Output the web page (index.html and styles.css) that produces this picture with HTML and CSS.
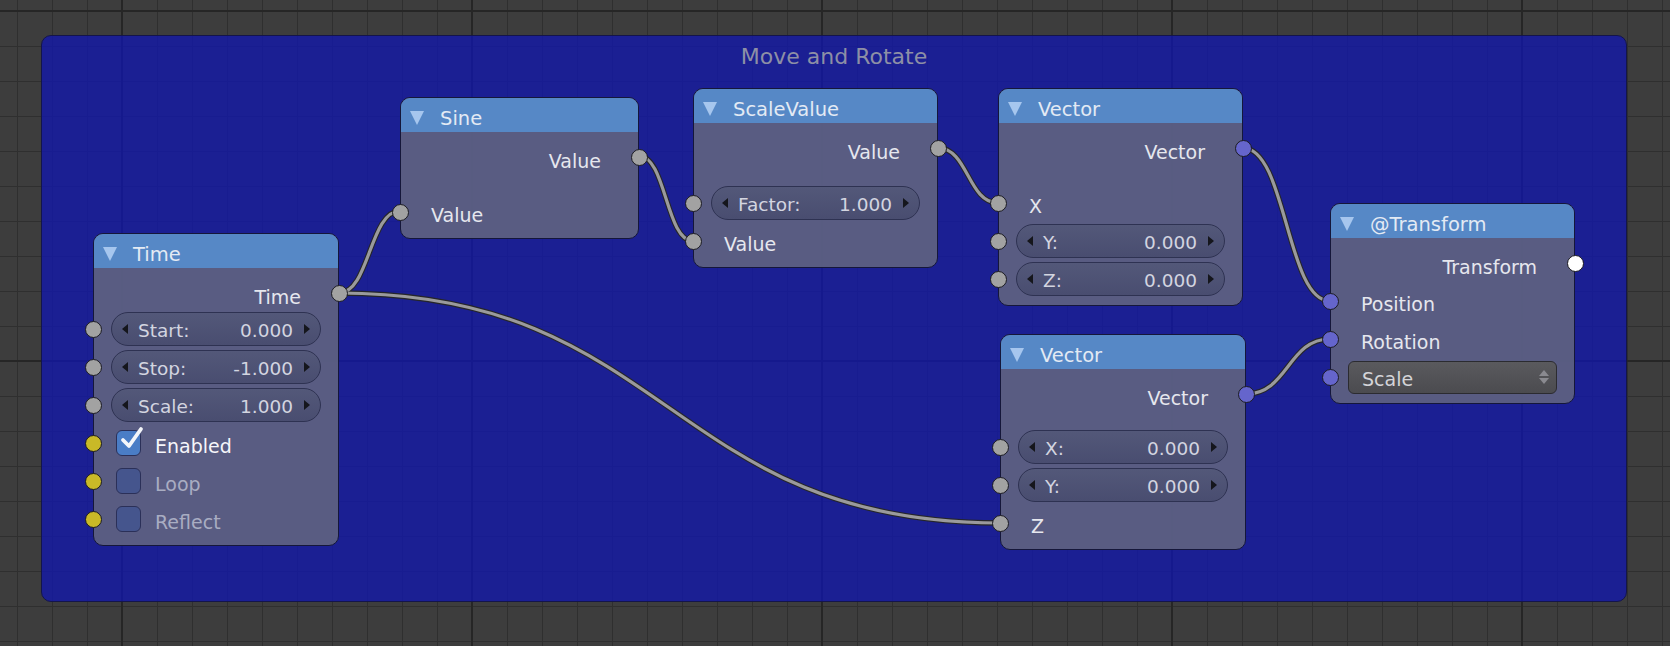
FILE: index.html
```html
<!DOCTYPE html>
<html>
<head>
<meta charset="utf-8">
<link rel="stylesheet" href="styles.css">
</head>
<body>
<div class="canvas">
  <div class="frame">
    <div class="frame-title">Move and Rotate</div>
  </div>

  <svg class="wires" width="1670" height="646" viewBox="0 0 1670 646">
    <g class="wire-outer">
      <path d="M339 293 C369.5 293 369.5 211 400 211"/>
      <path d="M339 293 C669.5 293 669.5 523 1000 523"/>
      <path d="M639 156 C666 156 666 241 693 241"/>
      <path d="M938 148 C968 148 968 203 998 203"/>
      <path d="M1243 148 C1286.5 148 1286.5 301 1330 301"/>
      <path d="M1246 394 C1288 394 1288 339 1330 339"/>
    </g>
    <g class="wire-inner">
      <path d="M339 293 C369.5 293 369.5 211 400 211"/>
      <path d="M339 293 C669.5 293 669.5 523 1000 523"/>
      <path d="M639 156 C666 156 666 241 693 241"/>
      <path d="M938 148 C968 148 968 203 998 203"/>
      <path d="M1243 148 C1286.5 148 1286.5 301 1330 301"/>
      <path d="M1246 394 C1288 394 1288 339 1330 339"/>
    </g>
  </svg>

  <!-- Time -->
  <div class="node n-time">
    <div class="node-head"><span class="tri"></span><span class="title">Time</span></div>
    <div class="node-body">
      <div class="row out"><span class="label">Time</span><span class="sock gray"></span></div>
      <div class="row in fld"><span class="sock gray"></span>
        <div class="field"><span class="arr l"></span><span class="fl">Start:</span><span class="fv">0.000</span><span class="arr r"></span></div>
      </div>
      <div class="row in fld"><span class="sock gray"></span>
        <div class="field"><span class="arr l"></span><span class="fl">Stop:</span><span class="fv">-1.000</span><span class="arr r"></span></div>
      </div>
      <div class="row in fld"><span class="sock gray"></span>
        <div class="field"><span class="arr l"></span><span class="fl">Scale:</span><span class="fv">1.000</span><span class="arr r"></span></div>
      </div>
      <div class="row in chk"><span class="sock yellow"></span>
        <span class="cb on"><svg class="check" width="25" height="25" viewBox="0 0 25 25"><polyline points="5,12 11,18 23,1"/></svg></span><span class="cl bright">Enabled</span>
      </div>
      <div class="row in chk"><span class="sock yellow"></span>
        <span class="cb"></span><span class="cl dim">Loop</span>
      </div>
      <div class="row in chk"><span class="sock yellow"></span>
        <span class="cb"></span><span class="cl dim">Reflect</span>
      </div>
    </div>
  </div>

  <!-- Sine -->
  <div class="node n-sine">
    <div class="node-head"><span class="tri"></span><span class="title">Sine</span></div>
    <div class="node-body">
      <div class="row out"><span class="label">Value</span><span class="sock gray"></span></div>
      <div class="spacer tall"></div>
      <div class="row in"><span class="sock gray"></span><span class="label">Value</span></div>
    </div>
  </div>

  <!-- ScaleValue -->
  <div class="node n-scale">
    <div class="node-head"><span class="tri"></span><span class="title">ScaleValue</span></div>
    <div class="node-body">
      <div class="row out"><span class="label">Value</span><span class="sock gray"></span></div>
      <div class="spacer tall"></div>
      <div class="row in fld"><span class="sock gray"></span>
        <div class="field"><span class="arr l"></span><span class="fl">Factor:</span><span class="fv">1.000</span><span class="arr r"></span></div>
      </div>
      <div class="row in"><span class="sock gray"></span><span class="label">Value</span></div>
    </div>
  </div>

  <!-- Vector 1 -->
  <div class="node n-vec1">
    <div class="node-head"><span class="tri"></span><span class="title">Vector</span></div>
    <div class="node-body">
      <div class="row out"><span class="label">Vector</span><span class="sock violet"></span></div>
      <div class="spacer tall"></div>
      <div class="row in"><span class="sock gray"></span><span class="label">X</span></div>
      <div class="row in fld"><span class="sock gray"></span>
        <div class="field"><span class="arr l"></span><span class="fl">Y:</span><span class="fv">0.000</span><span class="arr r"></span></div>
      </div>
      <div class="row in fld"><span class="sock gray"></span>
        <div class="field"><span class="arr l"></span><span class="fl">Z:</span><span class="fv">0.000</span><span class="arr r"></span></div>
      </div>
    </div>
  </div>

  <!-- Vector 2 -->
  <div class="node n-vec2">
    <div class="node-head"><span class="tri"></span><span class="title">Vector</span></div>
    <div class="node-body">
      <div class="row out"><span class="label">Vector</span><span class="sock violet"></span></div>
      <div class="spacer"></div>
      <div class="row in fld"><span class="sock gray"></span>
        <div class="field"><span class="arr l"></span><span class="fl">X:</span><span class="fv">0.000</span><span class="arr r"></span></div>
      </div>
      <div class="row in fld"><span class="sock gray"></span>
        <div class="field"><span class="arr l"></span><span class="fl">Y:</span><span class="fv">0.000</span><span class="arr r"></span></div>
      </div>
      <div class="row in"><span class="sock gray"></span><span class="label">Z</span></div>
    </div>
  </div>

  <!-- @Transform -->
  <div class="node n-trans">
    <div class="node-head"><span class="tri"></span><span class="title">@Transform</span></div>
    <div class="node-body">
      <div class="row out"><span class="label">Transform</span><span class="sock white"></span></div>
      <div class="spacer thin"></div>
      <div class="row in"><span class="sock violet"></span><span class="label">Position</span></div>
      <div class="row in"><span class="sock violet"></span><span class="label">Rotation</span></div>
      <div class="row in fld"><span class="sock violet"></span>
        <div class="dropdown"><span class="dl">Scale</span><span class="updown"><span class="up"></span><span class="dn"></span></span></div>
      </div>
    </div>
  </div>
</div>
</body>
</html>
```

FILE: styles.css
```css
html, body {
  margin: 0;
  padding: 0;
  background: #3d3d3d;
}

.canvas {
  position: relative;
  width: 1670px;
  height: 646px;
  overflow: hidden;
  font-family: "DejaVu Sans", "Noto Sans", sans-serif;
  background-color: #3d3d3d;
  background-image:
    linear-gradient(to right, #262626 2px, transparent 2px),
    linear-gradient(to bottom, #262626 2px, transparent 2px),
    linear-gradient(to right, #2f2f2f 1px, transparent 1px),
    linear-gradient(to bottom, #2f2f2f 1px, transparent 1px);
  background-size: 350px 350px, 350px 350px, 35px 35px, 35px 35px;
  background-position: 121px 0, 0 10px, 17px 0, 0 11px;
}

.frame {
  position: absolute;
  left: 41px;
  top: 35px;
  width: 1586px;
  height: 567px;
  box-sizing: border-box;
  border: 1px solid #14154a;
  border-radius: 10px;
  background: rgba(16, 21, 178, 0.74);
}

.frame-title {
  margin-top: 7px;
  text-align: center;
  font-size: 22px;
  line-height: 28px;
  color: #8d8fa6;
}

.wires {
  position: absolute;
  left: 0;
  top: 0;
  pointer-events: none;
}

.wire-outer path {
  fill: none;
  stroke: #26262a;
  stroke-width: 5.4;
}

.wire-inner path {
  fill: none;
  stroke: #9a9a9c;
  stroke-width: 3.2;
}

/* ---------- nodes ---------- */
.node {
  position: absolute;
  box-sizing: border-box;
  border: 1px solid #15173a;
  border-radius: 10px;
  background: rgba(98, 101, 128, 0.88);
  color: #e6e7ee;
  font-size: 19px;
}

.n-time  { left: 93px;   top: 233px; width: 246px; }
.n-sine  { left: 400px;  top: 97px;  width: 239px; }
.n-scale { left: 693px;  top: 88px;  width: 245px; }
.n-vec1  { left: 998px;  top: 88px;  width: 245px; }
.n-vec2  { left: 1000px; top: 334px; width: 246px; }
.n-trans { left: 1330px; top: 203px; width: 245px; }

.node-head {
  height: 34px;
  box-sizing: border-box;
  padding: 5px 0 0 9px;
  display: flex;
  align-items: center;
  background: #5688c6;
  border-radius: 9px 9px 0 0;
  color: #e3eaf4;
  font-size: 19.5px;
}

.title {
  line-height: 1;
  padding-top: 2px;
}

.tri {
  width: 0;
  height: 0;
  border-left: 7.5px solid transparent;
  border-right: 7.5px solid transparent;
  border-top: 14px solid #a6c6ee;
  margin-right: 16px;
}

.node-body {
  padding: 8px 0 7px;
}

.row {
  position: relative;
  height: 38px;
  display: flex;
  align-items: center;
}

.row.out {
  height: 34px;
  justify-content: flex-end;
  padding-right: 37px;
}

.row.in {
  padding-left: 30px;
}

.row.fld {
  padding: 0 17px;
}

.row.chk {
  padding-left: 22px;
}

.spacer {
  height: 17px;
}

.spacer.tall {
  height: 19px;
}

.spacer.thin {
  height: 2px;
}

.label {
  white-space: nowrap;
  line-height: 1;
  padding-top: 6px;
}

.row.out .label {
  padding-top: 8px;
}

/* ---------- sockets ---------- */
.sock {
  position: absolute;
  top: 50%;
  width: 17px;
  height: 17px;
  margin-top: -8.5px;
  box-sizing: border-box;
  border-radius: 50%;
  border: 1px solid #1b1b22;
}

.row.in .sock  { left: -9.5px; }
.row.out .sock { right: -9.5px; }

.sock.gray   { background: #a2a2a2; }
.sock.yellow { background: #c9b927; }
.sock.violet { background: #6565cc; }
.sock.white  { background: #ffffff; }

/* ---------- number fields ---------- */
.field {
  flex: 1;
  height: 34px;
  box-sizing: border-box;
  border: 1px solid #2e3252;
  border-radius: 17px;
  background: linear-gradient(#535879, #494d70);
  display: flex;
  align-items: center;
  padding: 0 10px;
  color: #d3d5e0;
  font-size: 18.5px;
}

.fl {
  flex: 1;
  margin-left: 10px;
  white-space: nowrap;
  line-height: 1;
  padding-top: 5px;
}

.fv {
  margin-right: 11px;
  white-space: nowrap;
  line-height: 1;
  padding-top: 5px;
}

.arr {
  width: 0;
  height: 0;
  border-top: 5px solid transparent;
  border-bottom: 5px solid transparent;
}

.arr.l { border-right: 6px solid #15161c; }
.arr.r { border-left: 6px solid #15161c; }

/* ---------- checkboxes ---------- */
.cb {
  position: relative;
  width: 25px;
  height: 26px;
  box-sizing: border-box;
  border-radius: 6px;
  border: 1px solid #2b3058;
  background: #45558d;
}

.cb.on {
  background: #4a7dc6;
}

.check {
  position: absolute;
  left: 1px;
  top: -3px;
  overflow: visible;
}

.check polyline {
  fill: none;
  stroke: #f4f6fa;
  stroke-width: 3.8;
  stroke-linecap: round;
  stroke-linejoin: round;
}

.cl {
  margin-left: 14px;
  line-height: 1;
  padding-top: 6px;
}

.cl.bright { color: #f6f6fa; }
.cl.dim    { color: #a9adc2; }

/* ---------- dropdown ---------- */
.dropdown {
  flex: 1;
  height: 33px;
  box-sizing: border-box;
  border: 1px solid #2b2b30;
  border-radius: 6px;
  background: linear-gradient(#5a5a5e, #4b4b4f);
  display: flex;
  align-items: center;
  padding: 0 7px 0 13px;
  color: #d4d4d8;
  font-size: 19px;
}

.dl {
  flex: 1;
  line-height: 1;
  padding-top: 5px;
}

.updown {
  display: flex;
  flex-direction: column;
  gap: 2px;
}

.up, .dn {
  width: 0;
  height: 0;
  border-left: 5px solid transparent;
  border-right: 5px solid transparent;
}

.up { border-bottom: 6px solid #8a8a90; }
.dn { border-top: 6px solid #8a8a90; }
```
